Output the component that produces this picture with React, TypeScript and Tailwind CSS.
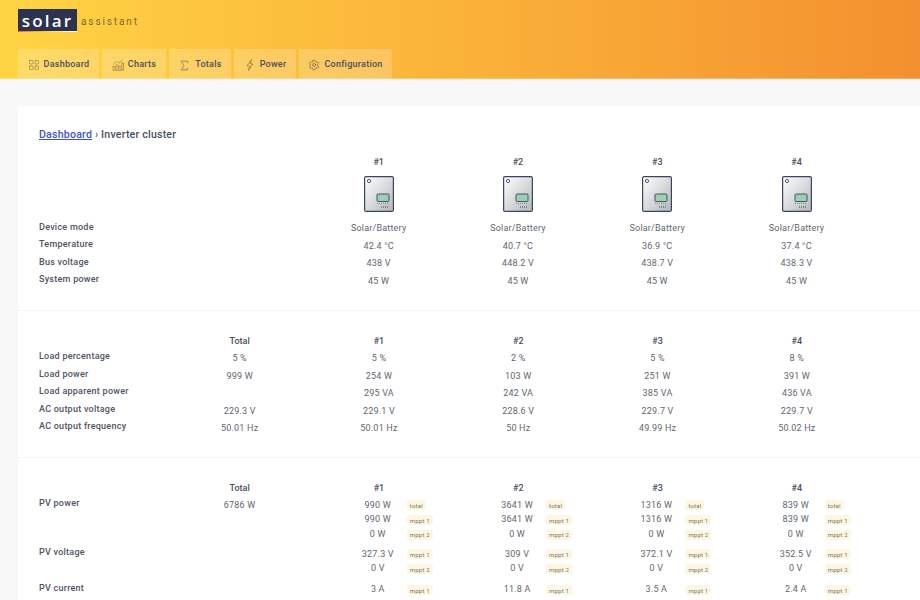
import { LayoutGrid, Sigma, Settings } from "lucide-react";

const font = "font-['Roboto',sans-serif]";

function ChartIcon() {
  return (
    <svg width="12" height="12" viewBox="0 0 24 24" fill="none" stroke="#8a7a45" strokeWidth="1.2">
      <rect x="2" y="15" width="4" height="8" />
      <rect x="8" y="12" width="4" height="11" />
      <rect x="14" y="14" width="4" height="9" />
      <rect x="20" y="8" width="3" height="15" />
      <path d="M2 11 L9 5 L14 8 L21 2" />
    </svg>
  );
}

function BoltIcon() {
  return (
    <svg width="12" height="12" viewBox="0 0 24 24" fill="none" stroke="#7a6a3a" strokeWidth="1.3" strokeLinejoin="round">
      <path d="M15 1 L6 14 H11.5 L9 23 L18 10 H12.5 Z" />
    </svg>
  );
}

function Inverter() {
  return (
    <svg width="30" height="36" viewBox="0 0 30 36">
      <defs>
        <linearGradient id="inv" x1="0" y1="0" x2="1" y2="1">
          <stop offset="0" stopColor="#ffffff" />
          <stop offset="1" stopColor="#b4b6ba" />
        </linearGradient>
      </defs>
      <rect x="0.6" y="0.6" width="28.8" height="34.8" rx="1.5" fill="url(#inv)" stroke="#3b4560" strokeWidth="1.2" />
      <circle cx="5" cy="5" r="1.6" fill="#fff" stroke="#3b4560" strokeWidth="0.9" />
      <rect x="13" y="18" width="12" height="7.5" rx="1" fill="#9ad0b0" stroke="#3b4560" strokeWidth="0.9" />
      <path d="M13 27.5 H25" stroke="#8a8d94" strokeWidth="1" strokeDasharray="1 1" />
      <path d="M17 31 H25" stroke="#3b4560" strokeWidth="1" strokeDasharray="1 1" />
    </svg>
  );
}

const tabs = [
  { label: "Dashboard", icon: <LayoutGrid size={12} strokeWidth={1.2} color="#8a7a45" />, w: "w-[81px]" },
  { label: "Charts", icon: <ChartIcon />, w: "w-[64px]" },
  { label: "Totals", icon: <Sigma size={13} strokeWidth={1.1} color="#5a5540" />, w: "w-[62px]" },
  { label: "Power", icon: <BoltIcon />, w: "w-[62px]" },
  { label: "Configuration", icon: <Settings size={12} strokeWidth={1.2} color="#5a5540" />, w: "w-[93px]" },
];

function Labels({ rows, step }: { rows: string[]; step: string }) {
  return (
    <div className="flex flex-col">
      {rows.map((r) => (
        <div key={r} className={`${step} flex items-center text-[9px] font-medium tracking-[0.25px] text-[#4f5363] whitespace-nowrap`}>
          {r}
        </div>
      ))}
    </div>
  );
}

function Values({ rows }: { rows: string[] }) {
  return (
    <div className="flex flex-col">
      {rows.map((r, i) => (
        <div key={i} className="h-[17.5px] flex items-center justify-center text-[9px] tracking-[0.2px] text-[#62666f] whitespace-nowrap">
          {r}
        </div>
      ))}
    </div>
  );
}

function Head({ t }: { t: string }) {
  return <div className="h-[14px] flex items-center justify-center text-[9px] font-medium text-[#4a4e5e]">{t}</div>;
}

function Tagged({ v, tag }: { v: string; tag: string }) {
  return (
    <div className="h-[14.75px] flex items-center pl-[39.5px]">
      <span className="w-[58px] text-center text-[9px] tracking-[0.2px] text-[#62666f] whitespace-nowrap">{v}</span>
      <span className="h-[10px] px-[3px] flex items-center bg-[#fdf6e0] rounded-[2px] text-[6px] tracking-[0.2px] text-[#77776f] whitespace-nowrap">{tag}</span>
    </div>
  );
}

const info = [
  ["Solar/Battery", "42.4 °C", "438 V", "45 W"],
  ["Solar/Battery", "40.7 °C", "448.2 V", "45 W"],
  ["Solar/Battery", "36.9 °C", "438.7 V", "45 W"],
  ["Solar/Battery", "37.4 °C", "438.3 V", "45 W"],
];
const ac = [
  ["5 %", "999 W", "", "229.3 V", "50.01 Hz"],
  ["5 %", "254 W", "295 VA", "229.1 V", "50.01 Hz"],
  ["2 %", "103 W", "242 VA", "228.6 V", "50 Hz"],
  ["5 %", "251 W", "385 VA", "229.7 V", "49.99 Hz"],
  ["8 %", "391 W", "436 VA", "229.7 V", "50.02 Hz"],
];
const pv = [
  { p: ["990 W", "990 W", "0 W"], v: ["327.3 V", "0 V"], c: "3 A" },
  { p: ["3641 W", "3641 W", "0 W"], v: ["309 V", "0 V"], c: "11.8 A" },
  { p: ["1316 W", "1316 W", "0 W"], v: ["372.1 V", "0 V"], c: "3.5 A" },
  { p: ["839 W", "839 W", "0 W"], v: ["352.5 V", "0 V"], c: "2.4 A" },
];

export default function App() {
  return (
    <div className={`h-[600px] overflow-hidden bg-[#f8f8f8] ${font}`}>
      <header className="h-[79px] bg-gradient-to-r from-[#ffd444] to-[#f3902f] shadow-[inset_0_-1px_0_rgba(255,255,255,0.25)] flex flex-col">
        <div className="h-[49px] pl-[18px] pt-[9px] flex items-start">
          <div className="w-[59px] flex flex-col">
            <div className="h-[22px] bg-[#2b3350] flex items-center justify-center text-white text-[17px] font-semibold tracking-[2.2px] leading-none font-['Open_Sans',sans-serif]">
              solar
            </div>
            <div className="h-[1px] bg-gradient-to-r from-[#f06020] via-[#ffd040] to-white" />
          </div>
          <span className="ml-[4px] mt-[8px] text-[10px] tracking-[1.9px] leading-none text-[#7a6a2a]">assistant</span>
        </div>
        <nav className="flex gap-[3px] pl-[18px]">
          {tabs.map((t) => (
            <div key={t.label} className={`${t.w} h-[30px] pt-[2px] bg-white/20 rounded-t-[1px] flex items-center justify-center gap-[4px] text-[9px] font-medium tracking-[0.25px] text-[#4a4f62]`}>
              {t.icon}
              <span>{t.label}</span>
            </div>
          ))}
        </nav>
      </header>

      <main className="ml-[18px] mt-[27px] min-h-[600px] bg-white">
        <section className="h-[205px] pl-[21px] pt-[21px] border-b border-[#f5f5f5]">
          <div className="text-[10.6px] font-medium tracking-[0.2px] leading-[15px] text-[#4a4e5e]">
            <a className="text-[#3f51c9] underline">Dashboard</a> › Inverter cluster
          </div>
          <div className="flex mt-[14px]">
            <div className="w-[270px] pt-[63px]">
              <Labels step="h-[17.4px]" rows={["Device mode", "Temperature", "Bus voltage", "System power"]} />
            </div>
            {info.map((col, i) => (
              <div key={i} className="w-[139.3px]">
                <Head t={`#${i + 1}`} />
                <div className="flex justify-center mt-[6px] mb-[8px]"><Inverter /></div>
                <Values rows={col} />
              </div>
            ))}
          </div>
        </section>

        <section className="h-[147px] pl-[21px] pt-[23.5px] border-b border-[#f5f5f5]">
          <div className="flex">
            <div className="w-[131px] pt-[13.5px]">
              <Labels step="h-[17.5px]" rows={["Load percentage", "Load power", "Load apparent power", "AC output voltage", "AC output frequency"]} />
            </div>
            {ac.map((col, i) => (
              <div key={i} className="w-[139.3px]">
                <div className="mb-[1.5px]"><Head t={i === 0 ? "Total" : `#${i}`} /></div>
                <Values rows={col} />
              </div>
            ))}
          </div>
        </section>

        <section className="pl-[21px] pt-[23.5px]">
          <div className="flex">
            <div className="w-[131px] pt-[15.5px] text-[9px]">
              <div className="h-[49px]"><Labels step="h-[14px]" rows={["PV power"]} /></div>
              <div className="h-[36px]"><Labels step="h-[14px]" rows={["PV voltage"]} /></div>
              <Labels step="h-[14px]" rows={["PV current"]} />
            </div>
            <div className="w-[139.3px]">
              <Head t="Total" />
              <div className="h-[21px] flex items-center justify-center text-[9px] tracking-[0.2px] text-[#62666f]">6786 W</div>
            </div>
            {pv.map((c, i) => (
              <div key={i} className="w-[139.3px]">
                <Head t={`#${i + 1}`} />
                <div className="mt-[2.5px]">
                  <Tagged v={c.p[0]} tag="total" />
                  <Tagged v={c.p[1]} tag="mppt 1" />
                  <Tagged v={c.p[2]} tag="mppt 2" />
                </div>
                <div className="mt-[4.75px]">
                  <Tagged v={c.v[0]} tag="mppt 1" />
                  <Tagged v={c.v[1]} tag="mppt 2" />
                </div>
                <div className="mt-[6.25px]">
                  <Tagged v={c.c} tag="mppt 1" />
                </div>
              </div>
            ))}
          </div>
        </section>
      </main>
    </div>
  );
}
